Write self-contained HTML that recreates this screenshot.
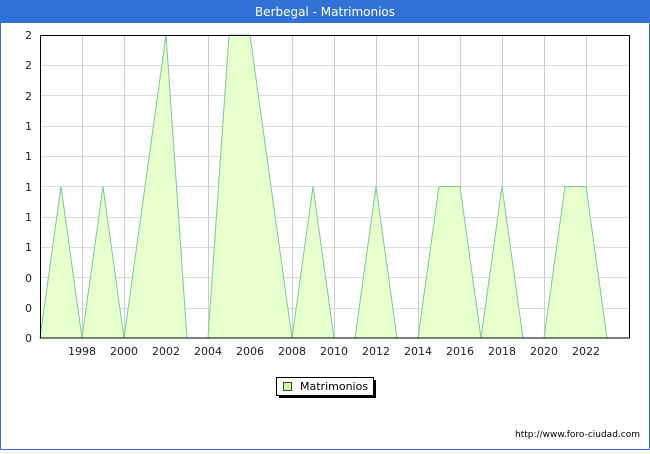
<!DOCTYPE html>
<html><head><style>
body{margin:0;width:650px;height:450px;overflow:hidden;background:#fff;font-family:"DejaVu Sans","Liberation Sans",sans-serif;}
</style></head><body>
<svg width="650" height="450" xmlns="http://www.w3.org/2000/svg" font-family="DejaVu Sans, Liberation Sans, sans-serif">
<rect x="0.5" y="0.5" width="649" height="449" fill="#fff" stroke="#3272d6"/>
<rect x="0" y="0" width="650" height="23" fill="#3272d6"/>
<text x="325" y="16" fill="#fff" font-size="12" text-anchor="middle">Berbegal - Matrimonios</text>
<g stroke="#dcdcdc" stroke-width="1">
<line x1="40" y1="65.5" x2="630" y2="65.5"/><line x1="40" y1="95.5" x2="630" y2="95.5"/>
<line x1="40" y1="126.5" x2="630" y2="126.5"/><line x1="40" y1="156.5" x2="630" y2="156.5"/>
<line x1="40" y1="186.5" x2="630" y2="186.5"/><line x1="40" y1="217.5" x2="630" y2="217.5"/>
<line x1="40" y1="247.5" x2="630" y2="247.5"/><line x1="40" y1="277.5" x2="630" y2="277.5"/>
<line x1="40" y1="308.5" x2="630" y2="308.5"/>
</g>
<g stroke="#cccccc">
<line x1="82.5" y1="35" x2="82.5" y2="338"/><line x1="124.5" y1="35" x2="124.5" y2="338"/>
<line x1="166.5" y1="35" x2="166.5" y2="338"/><line x1="208.5" y1="35" x2="208.5" y2="338"/>
<line x1="250.5" y1="35" x2="250.5" y2="338"/><line x1="292.5" y1="35" x2="292.5" y2="338"/>
<line x1="334.5" y1="35" x2="334.5" y2="338"/><line x1="376.5" y1="35" x2="376.5" y2="338"/>
<line x1="418.5" y1="35" x2="418.5" y2="338"/><line x1="460.5" y1="35" x2="460.5" y2="338"/>
<line x1="502.5" y1="35" x2="502.5" y2="338"/><line x1="544.5" y1="35" x2="544.5" y2="338"/>
<line x1="586.5" y1="35" x2="586.5" y2="338"/>
</g>
<polygon fill="#e6ffcc" stroke="#7fc79a" stroke-width="1" points="40,338 61,186.5 82,338 103,186.5 124,338 145,186.5 166,35 187,338 208,338 229,35 250,35 271,186.5 292,338 313,186.5 334,338 355,338 376,186.5 397,338 418,338 439,186.5 460,186.5 481,338 502,186.5 523,338 544,338 565,186.5 586,186.5 607,338"/>
<rect x="40.5" y="35.5" width="589" height="302.5" fill="none" stroke="#000"/>
<g font-size="11" fill="#222" text-anchor="end">
<text x="32" y="39">2</text><text x="32" y="69">2</text><text x="32" y="100">2</text>
<text x="32" y="130">1</text><text x="32" y="160">1</text><text x="32" y="191">1</text>
<text x="32" y="221">1</text><text x="32" y="251">1</text><text x="32" y="282">0</text>
<text x="32" y="312">0</text><text x="32" y="342">0</text>
</g>
<g font-size="11" fill="#222" text-anchor="middle">
<text x="82" y="355">1998</text><text x="124" y="355">2000</text><text x="166" y="355">2002</text>
<text x="208" y="355">2004</text><text x="250" y="355">2006</text><text x="292" y="355">2008</text>
<text x="334" y="355">2010</text><text x="376" y="355">2012</text><text x="418" y="355">2014</text>
<text x="460" y="355">2016</text><text x="502" y="355">2018</text><text x="544" y="355">2020</text>
<text x="586" y="355">2022</text>
</g>
<rect x="279" y="380" width="97" height="18" fill="#000"/>
<rect x="276.5" y="377.5" width="97" height="18" fill="#fff" stroke="#000"/>
<rect x="283.5" y="382.5" width="8" height="8" fill="#ccff99" stroke="#444"/>
<text x="300" y="390" font-size="11" fill="#000">Matrimonios</text>
<text x="640" y="437" font-size="9" fill="#000" text-anchor="end">http://www.foro-ciudad.com</text>
</svg>
</body></html>
